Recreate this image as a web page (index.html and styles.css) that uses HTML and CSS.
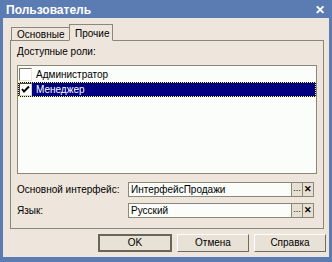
FILE: index.html
```html
<!DOCTYPE html>
<html lang="ru">
<head>
    <meta charset="UTF-8">
    <title>Пользователь</title>
    <link rel="stylesheet" href="styles.css">
</head>
<body>
    <div class="window">
        <div class="titlebar">
            <span class="title">Пользователь</span>
            <span class="close">✕</span>
        </div>
        <div class="client">
            <div class="tabs">
                <div class="tab">Основные</div>
                <div class="tab active">Прочие</div>
            </div>
            <div class="panel">
                <div class="caption">Доступные роли:</div>
                <div class="list">
                    <div class="row">
                        <span class="check"></span>
                        <span>Администратор</span>
                    </div>
                    <div class="row selected">
                        <span class="check checked">
                            <svg width="9" height="9" viewBox="0 0 9 9"><path d="M1 4 L3 6.5 L8 1.5" fill="none" stroke="#000" stroke-width="2"/></svg>
                        </span>
                        <span>Менеджер</span>
                    </div>
                </div>
                <div class="field">
                    <label>Основной интерфейс:</label>
                    <div class="input">ИнтерфейсПродажи</div>
                    <div class="btn-small">...</div>
                    <div class="btn-small clear">✕</div>
                </div>
                <div class="field">
                    <label>Язык:</label>
                    <div class="input">Русский</div>
                    <div class="btn-small">...</div>
                    <div class="btn-small clear">✕</div>
                </div>
            </div>
            <div class="buttons">
                <div class="button default">OK</div>
                <div class="button">Отмена</div>
                <div class="button">Справка</div>
            </div>
        </div>
    </div>
</body>
</html>
```

FILE: styles.css
```css
body {
    margin: 0;
    font-family: 'Liberation Sans', Arial, sans-serif;
    font-size: 10px;
    color: #000;
}

.window {
    width: 332px;
    height: 262px;
    box-sizing: border-box;
    background-color: #5b7bb3;
    padding: 0 3px 5px 3px;
    display: flex;
    flex-direction: column;
}

.titlebar {
    height: 18px;
    display: flex;
    align-items: center;
    justify-content: space-between;
    color: #fff;
}

.title {
    font-weight: bold;
    font-size: 12px;
    margin-left: 3px;
    margin-top: 1px;
}

.close {
    font-weight: bold;
    font-size: 12px;
    margin-right: 4px;
    margin-top: 1px;
}

.client {
    flex: 1;
    background-color: #eee6dc;
    padding: 7px 0 0 7px;
    box-sizing: border-box;
    white-space: nowrap;
}

.tabs {
    display: flex;
    align-items: flex-end;
    height: 15px;
    padding-left: 1px;
    position: relative;
    z-index: 1;
}

.tab {
    height: 12px;
    line-height: 13px;
    padding: 0 5px;
    width: 47px;
    border: 1px solid #8c8878;
    border-bottom: none;
    background-color: #eee6dc;
    overflow: hidden;
}

.tab.active {
    height: 15px;
    line-height: 17px;
    width: 32px;
    border-bottom: 1px solid #eee6dc;
    margin-bottom: -1px;
    margin-left: -1px;
}

.panel {
    width: 314px;
    height: 189px;
    box-sizing: border-box;
    border: 1px solid #8c8878;
    padding: 3px 5px 0 6px;
}

.caption {
    height: 14px;
    line-height: 16px;
    margin-bottom: 7px;
}

.list {
    height: 109px;
    width: 300px;
    box-sizing: border-box;
    border: 1px solid #8c8878;
    background-color: #fafdf9;
    padding-top: 1px;
    margin-bottom: 8px;
}

.row {
    height: 15px;
    display: flex;
    align-items: center;
    gap: 4px;
    padding-left: 1px;
    box-sizing: border-box;
}

.row.selected {
    background-color: #000080;
    color: #fff;
    outline: 1px dotted #ffff40;
    outline-offset: -1px;
}

.check {
    width: 13px;
    height: 13px;
    box-sizing: border-box;
    background-color: #fff;
    border: 1px solid;
    border-color: #7a7668 #eee6dc #eee6dc #7a7668;
    display: flex;
    align-items: center;
    justify-content: center;
}

.check.checked {
    border-color: #404040 #d4d0c8 #d4d0c8 #404040;
}

.field {
    display: flex;
    align-items: center;
    height: 15px;
    margin-bottom: 6px;
}

.field label {
    width: 111px;
}

.input {
    width: 164px;
    height: 15px;
    box-sizing: border-box;
    border: 1px solid #8c8878;
    background-color: #fafdf9;
    line-height: 13px;
    padding-left: 2px;
}

.btn-small {
    width: 11px;
    height: 15px;
    box-sizing: border-box;
    border: 1px solid #8c8878;
    border-left: none;
    background-color: #e6dfd2;
    font-size: 9px;
    line-height: 11px;
    text-align: center;
}

.btn-small.clear {
    font-weight: bold;
    line-height: 13px;
}

.buttons {
    display: flex;
    gap: 5px;
    padding: 5px 0 0 88px;
}

.button {
    width: 72px;
    height: 18px;
    box-sizing: border-box;
    border: 1px solid;
    border-color: #fff #6f6b5f #6f6b5f #fff;
    background-color: #e8e1d5;
    text-align: center;
    line-height: 16px;
}

.button.default {
    width: 74px;
    border: 2px solid #6a6656;
    line-height: 14px;
}
```
